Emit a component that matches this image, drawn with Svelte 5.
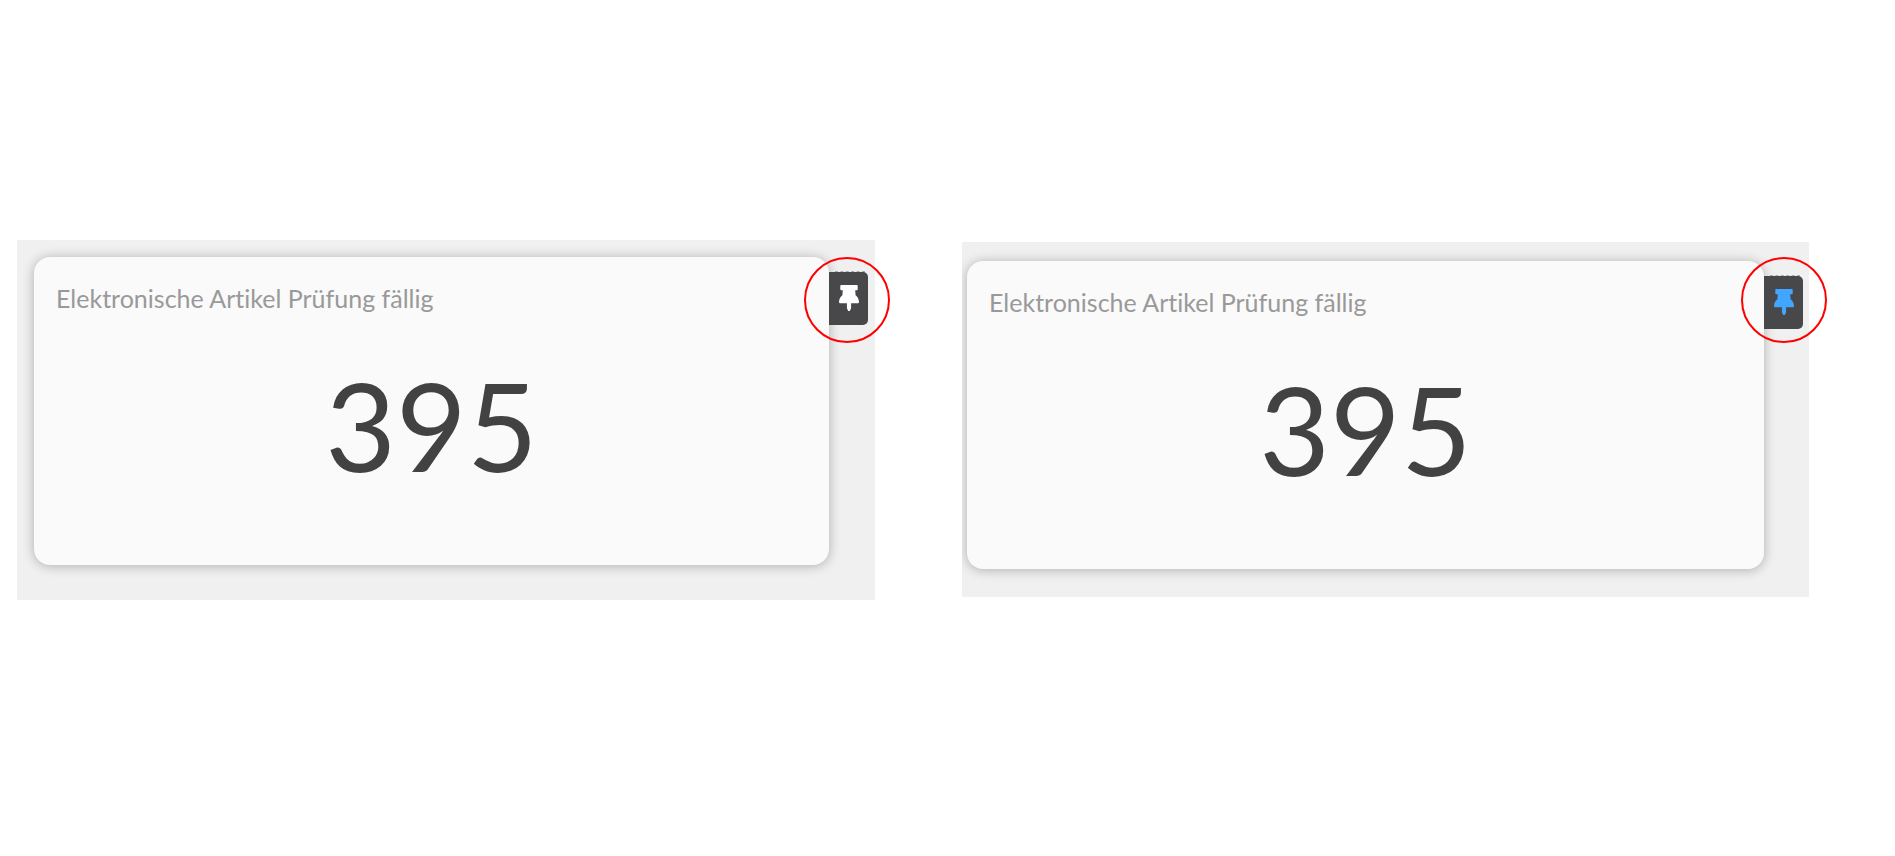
<script lang="ts">
  interface Tile {
    title: string;
    count: number;
    pinned: boolean;
  }

  const tiles: Tile[] = [
    { title: 'Elektronische Artikel Prüfung fällig', count: 395, pinned: false },
    { title: 'Elektronische Artikel Prüfung fällig', count: 395, pinned: true },
  ];
</script>

<main class="comparison">
  {#each tiles as tile}
    <section class="shot" class:pinned={tile.pinned}>
      <div class="panel">
        <article class="card">
          <h2>{tile.title}</h2>
          <div class="count">{tile.count}</div>
        </article>
        <button class="pin" type="button" aria-label="Kachel anheften" aria-pressed={tile.pinned}>
          <svg viewBox="0 0 20 26" width="20" height="26" aria-hidden="true">
            <path d="M2.2 0h15.6q0.9 0 0.9 0.9v3.4q0 0.9-0.9 0.9H16.2l0.4 5c2 1.4 3.2 3.4 3.4 6.8q0 1.3-1.2 1.3H12.1v4.9L10.8 26H9.2L7.9 23.2v-4.9H1.2q-1.2 0-1.2-1.3c0.2-3.4 1.4-5.4 3.4-6.8l0.4-5H2.2q-0.9 0-0.9-0.9v-3.4q0-0.9 0.9-0.9z" />
          </svg>
        </button>
      </div>
      <!-- Marker around the pin -->
      <span class="marker"></span>
    </section>
  {/each}
</main>

<style>
  :global(body) {
    margin: 0;
    background: #fff;
  }

  .comparison {
    display: grid;
    grid-template-columns: 858fr 847fr;
    gap: 87px;
    align-items: start;
    padding: 240px 86px 40px 17px;
    font-family: Lato, 'Liberation Sans', sans-serif;
  }

  .shot {
    position: relative;
  }

  .panel {
    display: flex;
    align-items: flex-start;
    padding: 17px 7px 35px 17px;
    background: #f0f0f0;
    overflow: hidden;
  }

  .card {
    flex: 1;
    box-sizing: border-box;
    min-height: 308px;
    padding: 23px 22px;
    background: #fafafa;
    border-radius: 16px;
    box-shadow: 0 1px 12px rgba(0, 0, 0, 0.28);
  }

  h2 {
    margin: 0;
    color: #999;
    font-size: 25px;
    font-weight: 400;
    font-variant-ligatures: none;
    line-height: 36px;
  }

  .count {
    margin-top: 34px;
    color: #424242;
    font-size: 122px;
    line-height: 150px;
    text-align: center;
  }

  .pin {
    position: relative;
    display: flex;
    align-items: center;
    justify-content: center;
    width: 39px;
    height: 53px;
    margin: 15px 0 0;
    padding: 0 0 2px;
    border: 0;
    border-radius: 0 5px 5px 0;
    background: #48484a;
    color: #fff;
    cursor: pointer;
  }

  .pin::before {
    content: '';
    position: absolute;
    top: -1px;
    left: 6px;
    right: 3px;
    border-top: 1px dashed #aaa;
  }

  .pin svg {
    fill: currentColor;
  }

  .marker {
    position: absolute;
    top: 17px;
    right: -15px;
    box-sizing: border-box;
    width: 86px;
    height: 86px;
    border: 2px solid #f00;
    border-radius: 50%;
    pointer-events: none;
  }

  .pinned {
    margin-top: 2px;
  }

  .pinned .panel {
    padding: 19px 6px 28px 5px;
  }

  .pinned .pin {
    color: #42a5ff;
  }

  .pinned .marker {
    top: 15px;
    right: -18px;
  }
</style>
